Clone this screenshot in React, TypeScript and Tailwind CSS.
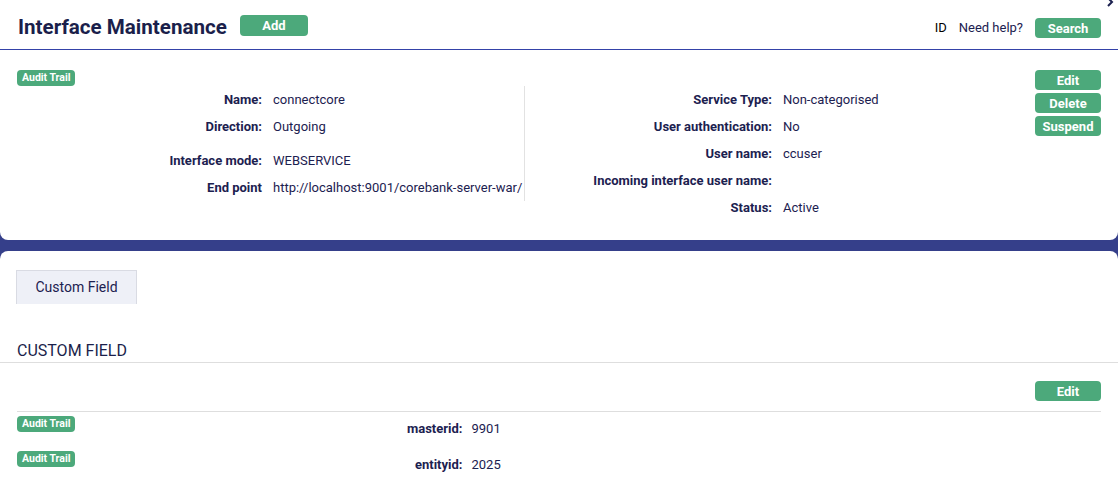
import React from 'react'

const green = 'bg-[#4ca97b]'

function Badge() {
  return (
    <span className="inline-flex h-[16px] items-center rounded-[4px] bg-[#4ca97b] px-[5px] text-[10.5px] font-bold leading-none text-white">
      Audit Trail
    </span>
  )
}

function GreenButton({ label, className = '' }: { label: string; className?: string }) {
  return (
    <button
      className={`${green} flex h-[20px] w-[66px] items-center justify-center rounded-[4px] text-[13px] font-bold leading-none text-white ${className}`}
    >
      {label}
    </button>
  )
}

function Row({ label, value, labelW }: { label: string; value?: string; labelW: string }) {
  return (
    <div className="flex h-[27px] items-center">
      <div className={`${labelW} shrink-0 text-right font-bold`}>{label}</div>
      <div className="pl-[11px]">{value}</div>
    </div>
  )
}

export default function App() {
  return (
    <div
      className="min-h-[499px] w-full bg-[#353f8a] text-[13px] text-[#1c2150]"
      style={{ fontFamily: 'Roboto, "Noto Sans", sans-serif' }}
    >
      {/* top card */}
      <div className="relative h-[240px] rounded-b-[8px] bg-white">
        <svg
          className="absolute right-[4px] top-[-3px]"
          width="8"
          height="10"
          viewBox="0 0 8 10"
          fill="none"
          stroke="#1c2150"
          strokeWidth="2"
        >
          <path d="M2 1 L6 5 L2 9" />
        </svg>

        <div className="flex h-[50px] items-center justify-between border-b border-[#3442a8] pl-[18px] pr-[17px]">
          <div className="mt-[4px] flex items-center">
            <h1 className="mt-[1px] text-[20.6px] font-bold text-[#1b1f4b]">Interface Maintenance</h1>
            <GreenButton label="Add" className="ml-[13px] mb-[1px] h-[21px] w-[68px]" />
          </div>
          <div className="mt-[7px] flex items-center">
            <span className="text-[13px] text-black">ID</span>
            <span className="ml-[12px] text-[13px] text-[#1c2150]">Need help?</span>
            <GreenButton label="Search" className="ml-[12px]" />
          </div>
        </div>

        <div className="flex px-[17px] pt-[20px]">
          <div className="flex-1">
            <div className="flex h-[16px]">
              <Badge />
            </div>
            <div className="flex items-start">
              <div className="w-[508px] border-r border-[#e2e2e2]">
                <Row label="Name:" value="connectcore" labelW="w-[245px]" />
                <Row label="Direction:" value="Outgoing" labelW="w-[245px]" />
                <div className="h-[7px]" />
                <Row label="Interface mode:" value="WEBSERVICE" labelW="w-[245px]" />
                <Row label="End point" value="http://localhost:9001/corebank-server-war/" labelW="w-[245px]" />
              </div>
              <div>
                <Row label="Service Type:" value="Non-categorised" labelW="w-[247px]" />
                <Row label="User authentication:" value="No" labelW="w-[247px]" />
                <Row label="User name:" value="ccuser" labelW="w-[247px]" />
                <Row label="Incoming interface user name:" labelW="w-[247px]" />
                <Row label="Status:" value="Active" labelW="w-[247px]" />
              </div>
            </div>
          </div>
          <div className="flex flex-col gap-[3px]">
            <GreenButton label="Edit" />
            <GreenButton label="Delete" />
            <GreenButton label="Suspend" />
          </div>
        </div>
      </div>

      {/* bottom card */}
      <div className="mt-[11px] min-h-[248px] rounded-t-[8px] bg-white pt-[19px]">
        <div className="px-[16px]">
          <div className="inline-flex h-[34px] w-[121px] items-center justify-center border border-b-0 border-[#d9dbe3] bg-[#eef0f7] text-[14px] text-[#1c2150]">
            Custom Field
          </div>
        </div>

        <div className="mt-[36px] border-b border-[#dedede] px-[17px]">
          <h2 className="text-[16px] uppercase leading-[22px] text-[#1b1f4b]">Custom Field</h2>
        </div>

        <div className="px-[17px]">
          <div className="flex justify-end border-b border-[#dedede] pb-[10px] pt-[18px]">
            <GreenButton label="Edit" />
          </div>
          <div className="flex h-[36px]">
            <div className="flex pt-[4px]">
              <Badge />
            </div>
            <div className="flex pt-[7px]">
              <div className="w-[387px] text-right font-bold">masterid:</div>
              <div className="pl-[9px]">9901</div>
            </div>
          </div>
          <div className="flex h-[36px]">
            <div className="flex pt-[3px]">
              <Badge />
            </div>
            <div className="flex pt-[7px]">
              <div className="w-[387px] text-right font-bold">entityid:</div>
              <div className="pl-[9px]">2025</div>
            </div>
          </div>
        </div>
      </div>
    </div>
  )
}
